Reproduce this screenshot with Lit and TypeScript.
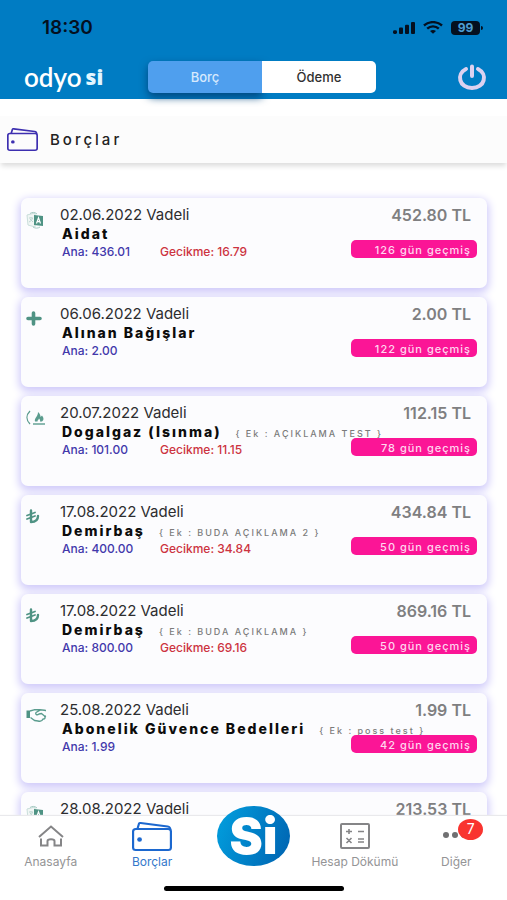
import { LitElement, html, css, svg, nothing } from "lit";
import { customElement, property, state } from "lit/decorators.js";
import { classMap } from "lit/directives/class-map.js";

type IconName = "translate" | "plus" | "gas" | "lira" | "handshake";

interface Debt {
  icon: IconName;
  due: string;
  name?: string;
  note?: string;
  principal?: string;
  late?: string;
  total: string;
  days?: number;
}

const DEBTS: Debt[] = [
  { icon: "translate", due: "02.06.2022", name: "Aidat", principal: "436.01", late: "16.79", total: "452.80", days: 126 },
  { icon: "plus", due: "06.06.2022", name: "Alınan Bağışlar", principal: "2.00", total: "2.00", days: 122 },
  { icon: "gas", due: "20.07.2022", name: "Dogalgaz (Isınma)", note: "AÇIKLAMA TEST", principal: "101.00", late: "11.15", total: "112.15", days: 78 },
  { icon: "lira", due: "17.08.2022", name: "Demirbaş", note: "BUDA AÇIKLAMA 2", principal: "400.00", late: "34.84", total: "434.84", days: 50 },
  { icon: "lira", due: "17.08.2022", name: "Demirbaş", note: "BUDA AÇIKLAMA", principal: "800.00", late: "69.16", total: "869.16", days: 50 },
  { icon: "handshake", due: "25.08.2022", name: "Abonelik Güvence Bedelleri", note: "poss test", principal: "1.99", total: "1.99", days: 42 },
  { icon: "translate", due: "28.08.2022", total: "213.53" },
];

const ICONS = {
  translate: svg`
    <path d="M1 4 L9 2 V16 L2 14 Z" fill="#f1f6f5" stroke="#c9deda"/>
    <path d="M3 7 h4 M5 6 v1 M6.500 7 C6 9 5 10 3 11 M4 8 L7 11" fill="none" stroke="#bcd6d1"/>
    <path d="M8 4 L17 5 V15 L8 14 Z" fill="#4f9384"/>
    <path d="M10.500 12.500 L12.500 6.800 L14.500 12.500 M11.200 10.600 h2.600" fill="none" stroke="#fff" stroke-width="1.200"/>
    <path d="M4 2.500 C6 1 9 1 11 3 M7 16 C9 17.500 12 17.500 14 16" fill="none" stroke="#a5cac3"/>`,
  plus: svg`<path d="M7.500 3 V14 M2 8.500 H14" fill="none" stroke="#4f9384" stroke-width="3.600" stroke-linecap="round"/>`,
  gas: svg`
    <path d="M4 2 C0 6 0 11 4 15" fill="none" stroke="#5b9c8e" stroke-width="1.300"/>
    <path d="M7 15 H19" stroke="#5b9c8e" stroke-width="1.400"/>
    <path d="M9 12.500 C8 9 12 8 12 3 C14.500 5 14.500 7 14.500 8 L16 6.500 C18 9 18 11 16 12.500 H14 C14.500 11 13.500 10 13 9.500 C12.500 11 11.500 11 11.500 12.500 Z" fill="#5b9c8e"/>`,
  lira: svg`
    <path d="M5 2.500 V14 C9 14 12 12 12 8" fill="none" stroke="#4f9384" stroke-width="2.400" stroke-linecap="round" stroke-linejoin="round"/>
    <path d="M1 7.500 L9 4.500 M1 11 L9 8" fill="none" stroke="#4f9384" stroke-width="1.800" stroke-linecap="round"/>`,
  handshake: svg`
    <path d="M0.500 4.500 H4 V12 H0.500 Z" fill="#4f9384"/>
    <path d="M4 5 L8 3.800 H14 C17 3.800 19 4.500 20 4.500 M14 4.200 L10 6.500 C9 8.500 11 9.500 13 8 L15.500 7.500 L18.500 10 C20 12 18.500 13.300 17 13 C16 15.300 13.500 15.500 12 15 L8.500 14.500 L4.500 11.500 M18.500 10.500 L20 10" fill="none" stroke="#5b9c8e" stroke-width="1.400" stroke-linejoin="round"/>`,
};

const wallet = svg`
  <rect x="1" y="7" width="35" height="21" rx="2.500"/>
  <path d="M5 7 L6.500 1.500 C6.700 1 7.200 1 8 1.100 L33 4.500 C35 4.800 35.500 5.500 35.500 8"/>
  <circle class="dot" cx="7" cy="17.500" r="2.200"/>`;

@customElement("debt-card")
class DebtCard extends LitElement {
  @property({ attribute: false }) debt!: Debt;

  static styles = css`
    :host { display: block; }
    .card {
      display: flex;
      height: 90px;
      box-sizing: border-box;
      padding: 8px 10px 0 5px;
      border-radius: 7px;
      background: #fcfcfe;
      box-shadow: 0 3px 9px 2px #d0cbfa;
      white-space: nowrap;
    }
    .icon { width: 21px; height: 18px; margin: 5px 13px 0 0; flex: none; }
    .main { flex: 1; min-width: 0; }
    .due { font-size: 15px; line-height: 18px; color: #2d2d2f; }
    .name { display: flex; align-items: baseline; gap: 14px; height: 20px; margin: 0 0 0 2px; font-size: 14px; line-height: 20px; font-weight: 800; letter-spacing: 2px; color: #0c0c0c; }
    .note { font-size: 9px; font-weight: 500; color: #7b7b7b; letter-spacing: 2px; }
    .parts { display: grid; grid-template-columns: 98px auto; padding-left: 2px; font-size: 12px; line-height: 16px; font-weight: 500; }
    .principal { color: #4238ab; }
    .late { color: #cc3340; }
    .side { position: relative; width: 126px; flex: none; }
    .total { padding-right: 6px; text-align: right; font-size: 16px; line-height: 18px; font-weight: 600; color: #7f7f81; }
    .overdue { margin-top: 16px; padding-right: 6px; border-radius: 5px; background: #fb1596; color: #ffd7ef; text-align: right; font-size: 11px; line-height: 20px; height: 18px; font-weight: 500; letter-spacing: 1px; }
  `;

  render() {
    const d = this.debt;
    return html`
      <article class="card">
        <svg class="icon" viewBox="0 0 21 18" aria-hidden="true">${ICONS[d.icon]}</svg>
        <div class="main">
          <div class="due">${d.due} Vadeli</div>
          ${d.name ? html`<h2 class="name">${d.name}${d.note ? html`<span class="note">{ Ek : ${d.note} }</span>` : nothing}</h2>` : nothing}
          ${d.principal ? html`
            <div class="parts">
              <span class="principal">Ana: ${d.principal}</span>
              ${d.late ? html`<span class="late">Gecikme: ${d.late}</span>` : nothing}
            </div>` : nothing}
        </div>
        <div class="side">
          <div class="total">${d.total} TL</div>
          ${d.days ? html`<div class="overdue">${d.days} gün geçmiş</div>` : nothing}
        </div>
      </article>`;
  }
}

@customElement("app-root")
class AppRoot extends LitElement {
  @state() private view: "debt" | "payment" = "debt";

  static styles = css`
    :host {
      display: flex;
      flex-direction: column;
      height: 100vh;
      overflow: hidden;
      background: #fff;
      font-family: Inter, "Liberation Sans", sans-serif;
    }
    .top { flex: none; background: #007cc3; height: 99px; }
    .status { display: flex; align-items: center; justify-content: space-between; height: 55px; padding: 0 24px 0 42px; box-sizing: border-box; color: #04101f; }
    .clock { font-size: 19px; line-height: 20px; font-weight: 600; }
    .signals { display: flex; align-items: center; gap: 8px; }
    .signal { width: 22px; height: 12px; }
    .wifi { width: 20px; height: 13px; }
    .battery { display: flex; align-items: center; gap: 1px; }
    .charge { width: 29px; border-radius: 4px; background: #04101f; color: #4c9fd4; text-align: center; font-size: 12px; line-height: 14px; font-weight: 700; }
    .cap { width: 2px; height: 4px; border-radius: 0 2px 2px 0; background: #04101f; }
    .bar { display: grid; grid-template-columns: 124px 1fr 111px; align-items: center; height: 44px; padding: 0 20px 0 24px; }
    .logo { display: flex; align-items: center; gap: 4px; color: #fff; font: 600 26px/24px Lato, sans-serif; }
    .logo-si { font: 800 21px/24px "Open Sans", sans-serif; color: #e2f6ff; }
    .segment { display: grid; grid-template-columns: 1fr 1fr; height: 32px; }
    .option { border: 0; padding: 0; background: #fff; color: #303030; font: 500 13px/32px Inter, sans-serif; }
    .option:first-child { border-radius: 5px 0 0 5px; }
    .option:last-child { border-radius: 0 5px 5px 0; }
    .option.active { background: #4f9fee; color: #d6e9fd; box-shadow: 0 4px 8px #00477f; }
    .power { justify-self: end; width: 30px; height: 28px; padding: 0; border: 0; background: none; }
    .power-icon { display: block; width: 30px; height: 28px; fill: none; stroke: #dcd1f0; stroke-width: 4; stroke-linecap: round; }

    .title { flex: none; display: flex; align-items: center; gap: 12px; height: 47px; margin-top: 17px; padding-left: 7px; background: #fcfcfc; box-shadow: 0 4px 5px -1px #ddd; }
    .title-icon { width: 31px; height: 23px; fill: none; stroke: #3d2fb0; stroke-width: 2; }
    .title-text { margin: 0; font-size: 15px; line-height: 20px; font-weight: 500; letter-spacing: 3px; color: #222; }
    .dot { stroke: none; fill: currentColor; }
    .title-icon .dot { fill: #3d2fb0; }

    .list { flex: 1; min-height: 0; overflow-y: auto; scrollbar-width: none; display: flex; flex-direction: column; gap: 9px; margin: 0; padding: 35px 20px 16px 21px; list-style: none; }

    .tabs { flex: none; position: relative; display: grid; grid-template-columns: repeat(5, 1fr); height: 84px; background: #fff; box-shadow: 0 -1px 1px #e9e9ec; }
    .tab { display: flex; flex-direction: column; align-items: center; gap: 3px; padding-top: 5px; height: 54px; box-sizing: border-box; color: #949496; font-size: 12px; line-height: 16px; text-decoration: none; white-space: nowrap; }
    .tab.active { color: #3378cb; }
    .art { display: flex; align-items: center; justify-content: center; height: 31px; position: relative; }
    .home { width: 26px; height: 22px; fill: none; stroke: #858587; stroke-width: 2; }
    .wallet { width: 40px; height: 29px; fill: none; stroke: #1c68cf; stroke-width: 2; color: #1c68cf; }
    .sums { width: 30px; height: 26px; fill: none; stroke: #858587; stroke-width: 2; }
    .more { width: 28px; height: 8px; fill: #707072; }
    .count { position: absolute; left: 16px; top: -2px; width: 25px; height: 21px; border-radius: 50%; background: #f9342f; color: #fff; text-align: center; font-size: 14px; line-height: 20px; }
    .brand { align-self: start; justify-self: center; width: 73px; height: 60px; margin-top: -10px; border-radius: 50%; background: linear-gradient(110deg, #02a0df, #0062b0); color: #fff; text-align: center; text-decoration: none; font: 900 50px/60px Inter, sans-serif; }
    .pill { position: absolute; left: 50%; bottom: 9px; width: 180px; height: 5px; margin-left: -90px; border-radius: 3px; background: #000; }
  `;

  private option(view: "debt" | "payment", label: string) {
    return html`<button
      class=${classMap({ option: true, active: this.view === view })}
      aria-pressed=${this.view === view}
      @click=${() => (this.view = view)}
    >${label}</button>`;
  }

  render() {
    return html`
      <header class="top">
        <div class="status">
          <span class="clock">18:30</span>
          <div class="signals">
            <svg class="signal" viewBox="0 0 22 13" preserveAspectRatio="none" fill="currentColor" aria-hidden="true">
              <rect x="0" y="9" width="4" height="4" rx="1.500"/><rect x="6" y="6" width="4" height="7" rx="1"/>
              <rect x="12" y="3" width="4" height="10" rx="1"/><rect x="18" y="0" width="4" height="13" rx="1"/>
            </svg>
            <svg class="wifi" viewBox="0 0 20 13" fill="none" stroke="currentColor" stroke-width="2.400" aria-hidden="true">
              <path d="M1 4.500 C6 0 14 0 19 4.500 M4.200 7.600 C7.500 4.600 12.500 4.600 15.800 7.600"/>
              <path d="M7 10 C9 8.500 11 8.500 13 10 L10 12.800 Z" fill="currentColor" stroke="none"/>
            </svg>
            <div class="battery"><span class="charge">99</span><span class="cap"></span></div>
          </div>
        </div>
        <div class="bar">
          <div class="logo"><span>odyo</span><span class="logo-si">si</span></div>
          <div class="segment">${this.option("debt", "Borç")}${this.option("payment", "Ödeme")}</div>
          <button class="power" aria-label="Çıkış">
            <svg class="power-icon" viewBox="0 0 30 28"><path d="M9 6 C-1 11 2 25 15 25 S31 11 21 6 M15 3.500 V13"/></svg>
          </button>
        </div>
      </header>
      <div class="title">
        <svg class="title-icon" viewBox="0 0 37 29" preserveAspectRatio="none" aria-hidden="true">${wallet}</svg>
        <h1 class="title-text">Borçlar</h1>
      </div>
      <ul class="list">
        ${DEBTS.map((d) => html`<li><debt-card .debt=${d}></debt-card></li>`)}
      </ul>
      <nav class="tabs">
        <a class="tab" href="#anasayfa">
          <span class="art"><svg class="home" viewBox="0 0 26 22" aria-hidden="true"><path d="M1 12 L13 1.500 L25 12 M3 13.500 V20.500 H9.500 V16 C9.500 13.500 16.500 13.500 16.500 16 V20.500 H23 V13.500"/></svg></span>
          <span>Anasayfa</span>
        </a>
        <a class="tab active" href="#borclar" aria-current="page">
          <span class="art"><svg class="wallet" viewBox="0 0 37 29" preserveAspectRatio="none" aria-hidden="true">${wallet}</svg></span>
          <span>Borçlar</span>
        </a>
        <a class="brand" href="#si">Si</a>
        <a class="tab" href="#hesap">
          <span class="art"><svg class="sums" viewBox="0 0 30 26" aria-hidden="true"><rect x="1" y="1" width="28" height="24" rx="1"/><path d="M6 8.500 H12 M9 6 V11 M18 8.500 H24 M6.500 15 L11.500 20 M11.500 15 L6.500 20 M18 16 H24 M18 19 H24" stroke-width="1.600"/></svg></span>
          <span>Hesap Dökümü</span>
        </a>
        <a class="tab" href="#diger">
          <span class="art">
            <svg class="more" viewBox="0 0 28 8" aria-hidden="true"><circle cx="4" cy="3" r="3"/><circle cx="13" cy="3" r="3"/><circle cx="22" cy="3" r="3"/></svg>
            <span class="count">7</span>
          </span>
          <span>Diğer</span>
        </a>
        <span class="pill"></span>
      </nav>`;
  }
}
